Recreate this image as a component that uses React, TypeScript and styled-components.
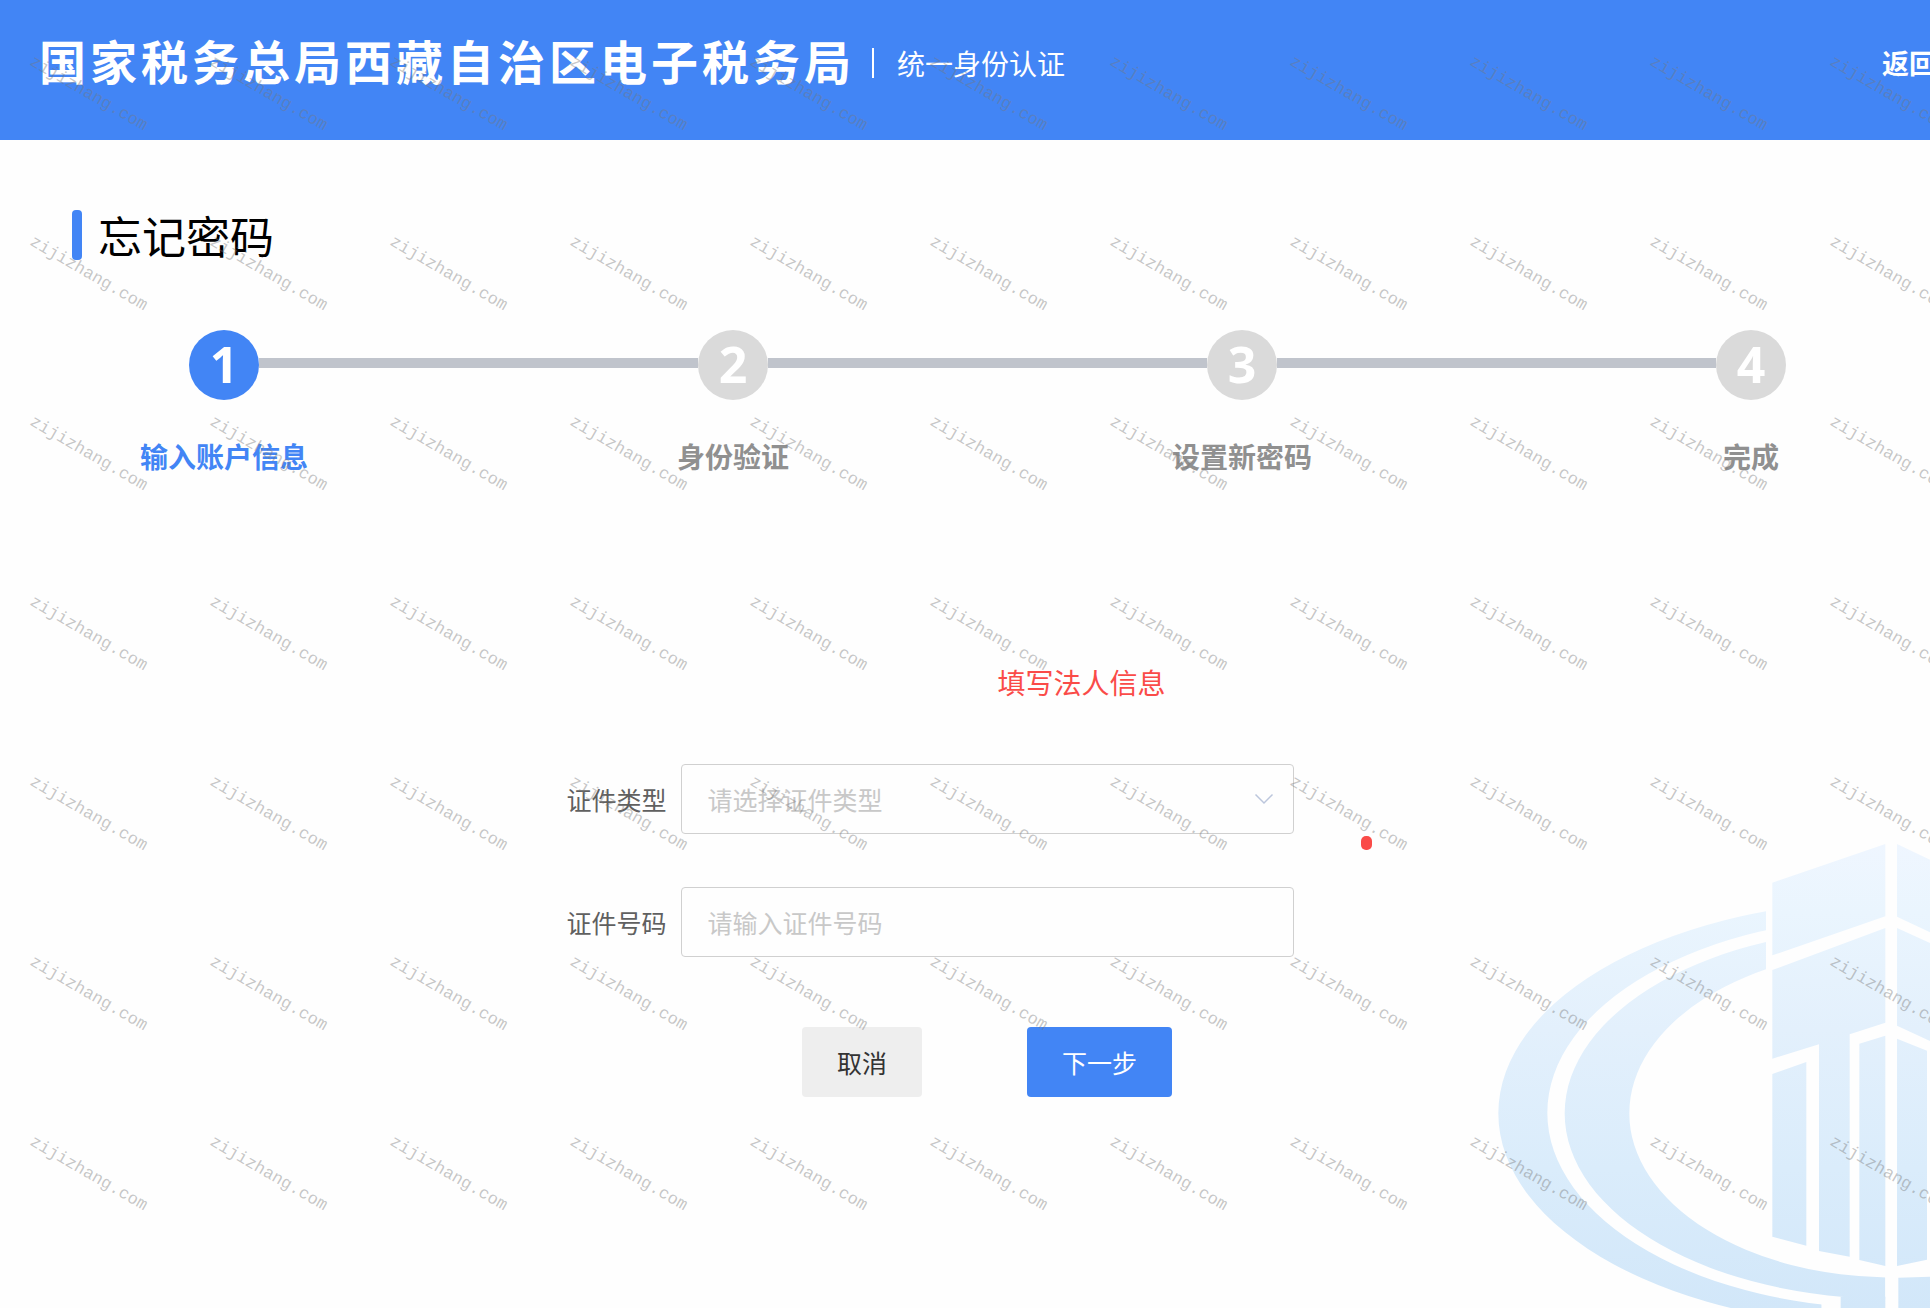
import React from "react";
import styled, { createGlobalStyle } from "styled-components";

const BLUE = "#4285f5";
const RED = "#fa4b48";
const GREY = "#dadada";

const GlobalStyle = createGlobalStyle`
  *, *::before, *::after { box-sizing: border-box; }
  html, body { margin: 0; padding: 0; }
  body {
    background: #fefefe;
    font-family: "Noto Sans CJK SC", "Noto Sans", sans-serif;
  }
  button, input, select { font-family: inherit; }
`;

const Page = styled.div`
  position: relative;
  min-height: 100vh;
  overflow: hidden;
`;

const Header = styled.header`
  display: flex;
  align-items: center;
  justify-content: space-between;
  height: 140px;
  padding: 0 0 14px 39px;
  overflow: hidden;
  background: ${BLUE};
  color: #fff;
  white-space: nowrap;
`;

const Brand = styled.div`
  display: flex;
  align-items: center;
`;

const SiteName = styled.h1`
  margin: 0;
  padding-bottom: 6px;
  font-size: 47px;
  line-height: 64px;
  font-weight: 700;
  letter-spacing: 4px;
`;

const Divider = styled.span`
  width: 2px;
  height: 30px;
  margin: 0 23px 0 17px;
  background: #fff;
`;

const SubTitle = styled.span`
  font-size: 28px;
  line-height: 40px;
`;

const BackLink = styled.a`
  flex: none;
  width: 48px;
  color: #fff;
  font-size: 27px;
  line-height: 40px;
  font-weight: 700;
  text-decoration: none;
`;

const Main = styled.main`
  position: relative;
  padding-top: 70px;
`;

const Heading = styled.h2`
  display: flex;
  align-items: center;
  gap: 16px;
  height: 50px;
  margin: 0 0 70px 72px;
  font-size: 44px;
  line-height: 50px;
  font-weight: 400;
  color: #000;

  &::before {
    content: "";
    width: 10px;
    height: 50px;
    border-radius: 4px;
    background: ${BLUE};
  }
`;

const Steps = styled.ol`
  display: flex;
  margin: 0;
  padding: 0 144px 0 189px;
  list-style: none;
`;

const Step = styled.li<{ $last: boolean }>`
  display: flex;
  flex: ${(p) => (p.$last ? "none" : "1")};
`;

const StepBody = styled.div`
  display: flex;
  flex: none;
  flex-direction: column;
  align-items: center;
  gap: 36px;
  width: 70px;
`;

const StepNumber = styled.span<{ $active: boolean }>`
  display: flex;
  align-items: center;
  justify-content: center;
  width: 70px;
  height: 70px;
  padding-bottom: 2px;
  border-radius: 50%;
  background: ${(p) => (p.$active ? BLUE : GREY)};
  color: #fff;
  font-family: "Noto Sans", "Open Sans", sans-serif;
  font-size: 50px;
  line-height: 68px;
  font-weight: 700;
`;

const StepLabel = styled.span<{ $active: boolean }>`
  color: ${(p) => (p.$active ? BLUE : "#909090")};
  font-size: 28px;
  line-height: 40px;
  font-weight: 700;
  white-space: nowrap;
`;

const Connector = styled.span`
  flex: 1;
  height: 10px;
  margin-top: 28px;
  background: #c0c4cc;
`;

const FormArea = styled.div`
  display: flex;
  justify-content: center;
  padding: 186px 70px 0 0;
`;

const Form = styled.form`
  display: grid;
  grid-template-columns: auto minmax(0, 613px);
  column-gap: 14px;
  align-items: center;
`;

const Hint = styled.p`
  grid-column: 2;
  margin: 0 0 62px;
  padding-left: 317px;
  color: ${RED};
  font-size: 28px;
  line-height: 40px;
`;

const Label = styled.label`
  margin-bottom: 53px;
  color: #606060;
  font-size: 25px;
  line-height: 40px;
`;

const Field = styled.div`
  position: relative;
  margin-bottom: 53px;
`;

const controlStyle = `
  display: block;
  width: 100%;
  height: 70px;
  padding: 0 26px;
  border: 1px solid #d0d0d0;
  border-radius: 4px;
  background: transparent;
  font-size: 25px;
  outline: none;
`;

const Select = styled.select`
  ${controlStyle}
  appearance: none;
  color: #c8c8c8;
`;

const Input = styled.input`
  ${controlStyle}
  color: #606060;

  &::placeholder {
    color: #c8c8c8;
    opacity: 1;
  }
`;

const Chevron = styled.svg`
  position: absolute;
  top: 28px;
  right: 20px;
  pointer-events: none;
`;

const Marker = styled.span`
  position: absolute;
  right: -78px;
  bottom: -16px;
  width: 11px;
  height: 14px;
  border-radius: 5px;
  background: ${RED};
`;

const Actions = styled.div`
  grid-column: 2;
  display: flex;
  justify-content: center;
  gap: 105px;
  padding-top: 17px;
`;

const Button = styled.button<{ $primary?: boolean }>`
  height: 70px;
  padding: 0 35px;
  border: 0;
  border-radius: 4px;
  background: ${(p) => (p.$primary ? BLUE : "#eee")};
  color: ${(p) => (p.$primary ? "#fff" : "#333")};
  font-size: 25px;
  line-height: 40px;
`;

const Emblem = styled.svg`
  position: absolute;
  right: 0;
  bottom: 0;
`;

const WatermarkLayer = styled.div`
  position: absolute;
  inset: 4px 0 0 -2px;
  display: grid;
  grid-template-columns: repeat(11, 180px);
  grid-auto-rows: 180px;
  overflow: hidden;
  pointer-events: none;
`;

const WatermarkText = styled.span`
  place-self: center;
  color: rgba(120, 120, 120, 0.42);
  font-family: "Liberation Mono", monospace;
  font-size: 17px;
  line-height: 20px;
  transform: rotate(30deg);
`;

const STEPS = ["输入账户信息", "身份验证", "设置新密码", "完成"];
const WATERMARKS = Array.from({ length: 77 }, (_, i) => i);

function ring(cx: number, cy: number, rx: number, ry: number) {
  return `M${cx - rx} ${cy}a${rx} ${ry} 0 1 0 ${2 * rx} 0a${rx} ${ry} 0 1 0 ${-2 * rx} 0z`;
}

function TaxEmblem() {
  return (
    <Emblem width="450" height="508" viewBox="0 0 1350 1524" aria-hidden="true">
      <defs>
        <linearGradient id="sky" gradientUnits="userSpaceOnUse" x1="0" y1="130" x2="0" y2="1524">
          <stop offset="0" stopColor="#eff6ff" />
          <stop offset="0.15" stopColor="#eaf5fe" />
          <stop offset="0.4" stopColor="#e3f0fc" />
          <stop offset="0.7" stopColor="#daecfb" />
          <stop offset="1" stopColor="#d2e7f9" />
        </linearGradient>
        <clipPath id="outerClip">
          <path d="M0 0H858V940H1025V1524H0z" />
        </clipPath>
        <clipPath id="innerClip">
          <path d="M0 0H858V940H1216V1524H0z" />
        </clipPath>
      </defs>
      <g fill="url(#sky)">
        <path
          clipPath="url(#outerClip)"
          fillRule="evenodd"
          d={ring(1235, 940, 1180, 640) + ring(1235, 938, 1033, 588)}
        />
        <path
          clipPath="url(#innerClip)"
          fillRule="evenodd"
          d={ring(1235, 940, 981, 557) + ring(1235, 940, 787, 492)}
        />
        <path d="M1082 1490H1216V1524H1082z" />
        <path d="M1255 1433L1350 1430V1524H1255z" />
        <path d="M877 248L1216 132V349L877 466z" />
        <path d="M1251 132L1350 179V397L1251 350z" />
        <path d="M877 510L1216 384V668L1109 703V1370L1017 1353V733L877 776z" />
        <path d="M1251 384L1350 429V723L1251 677z" />
        <path d="M877 822L979 786V1337L877 1310z" />
        <path d="M1138 731L1216 707V1398L1138 1380z" />
        <path d="M1251 716L1341 752V1379L1251 1398z" />
      </g>
    </Emblem>
  );
}

export default function App() {
  return (
    <Page>
      <GlobalStyle />
      <TaxEmblem />
      <Header>
        <Brand>
          <SiteName>国家税务总局西藏自治区电子税务局</SiteName>
          <Divider />
          <SubTitle>统一身份认证</SubTitle>
        </Brand>
        <BackLink href="#">返回</BackLink>
      </Header>
      <Main>
        <Heading>忘记密码</Heading>
        <Steps>
          {STEPS.map((label, i) => (
            <Step key={label} $last={i === STEPS.length - 1}>
              <StepBody>
                <StepNumber $active={i === 0}>{i + 1}</StepNumber>
                <StepLabel $active={i === 0}>{label}</StepLabel>
              </StepBody>
              {i < STEPS.length - 1 && <Connector />}
            </Step>
          ))}
        </Steps>
        <FormArea>
          <Form onSubmit={(e) => e.preventDefault()}>
            <Hint>填写法人信息</Hint>
            <Label htmlFor="cert-type">证件类型</Label>
            <Field>
              <Select id="cert-type" defaultValue="">
                <option value="">请选择证件类型</option>
              </Select>
              <Chevron width="20" height="14" viewBox="0 0 20 14" fill="none" aria-hidden="true">
                <path d="M1.5 2.5L10 11L18.5 2.5" stroke="#bcc6dc" strokeWidth="1.5" />
              </Chevron>
              <Marker />
            </Field>
            <Label htmlFor="cert-number">证件号码</Label>
            <Field>
              <Input id="cert-number" type="text" placeholder="请输入证件号码" />
            </Field>
            <Actions>
              <Button type="button">取消</Button>
              <Button type="submit" $primary>
                下一步
              </Button>
            </Actions>
          </Form>
        </FormArea>
      </Main>
      <WatermarkLayer aria-hidden="true">
        {WATERMARKS.map((i) => (
          <WatermarkText key={i}>zijizhang.com</WatermarkText>
        ))}
      </WatermarkLayer>
    </Page>
  );
}
